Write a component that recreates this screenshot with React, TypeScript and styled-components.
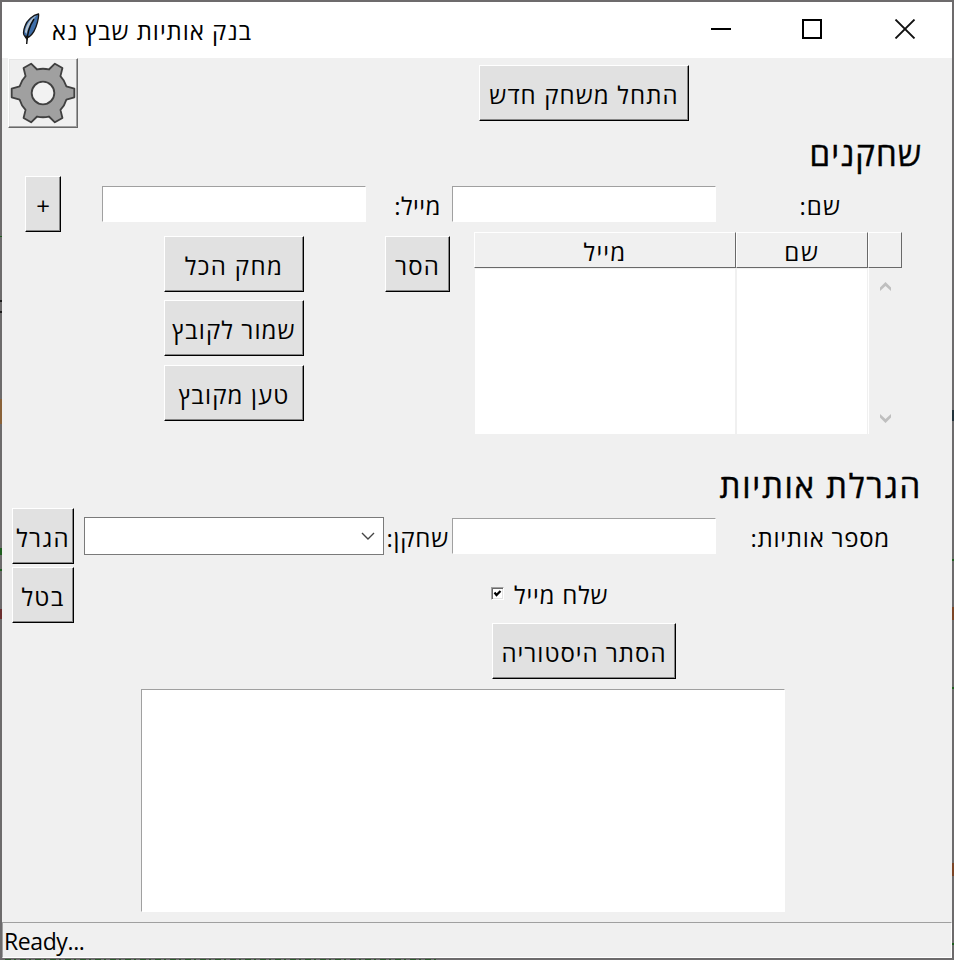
import React from "react";
import styled, { createGlobalStyle } from "styled-components";

const FACE = "#f0f0f0";
const SHADOW = "#a0a0a0";
const DARK = "#696969";

const GlobalStyle = createGlobalStyle`
  * { box-sizing: border-box; }
  body { margin: 0; }
`;

const Frame = styled.div`
  width: 954px;
  height: 960px;
  padding: 2px;
  overflow: hidden;
  background:
    linear-gradient(#1f5f1f, #1f5f1f) 0 236px / 2px 1px no-repeat,
    linear-gradient(#1c1c1c, #1c1c1c) 0 300px / 2px 2px no-repeat,
    linear-gradient(#1c1c1c, #1c1c1c) 0 311px / 2px 2px no-repeat,
    linear-gradient(#8a6238, #8a6238) 0 399px / 2px 25px no-repeat,
    linear-gradient(#1f5f1f, #1f5f1f) 0 548px / 2px 7px no-repeat,
    linear-gradient(#1f5f1f, #1f5f1f) 0 569px / 2px 2px no-repeat,
    linear-gradient(#6b2f2f, #6b2f2f) 0 609px / 2px 10px no-repeat,
    linear-gradient(#22313a, #22313a) 952px 410px / 2px 11px no-repeat,
    linear-gradient(#1f5f1f, #1f5f1f) 952px 559px / 2px 2px no-repeat,
    linear-gradient(#7c4526, #7c4526) 952px 607px / 2px 13px no-repeat,
    linear-gradient(#1f5f1f, #1f5f1f) 952px 687px / 2px 2px no-repeat,
    linear-gradient(#7c4526, #7c4526) 952px 863px / 2px 13px no-repeat,
    linear-gradient(#1f5f1f, #1f5f1f) 952px 943px / 2px 2px no-repeat,
    repeating-linear-gradient(90deg, #2c5a2c 0 6px, #6d6d6d 6px 9px, #2c5a2c 9px 11px, #6d6d6d 11px 15px) 5px 959px / 435px 1px no-repeat,
    #6d6b6c;
  font-family: "Open Sans", "Liberation Sans", sans-serif;
  font-size: 24px;
  line-height: 34px;
  color: #000;
`;

const Window = styled.div`
  display: flex;
  flex-direction: column;
  width: 950px;
  height: 956px;
  background: ${FACE};
`;

const Text = styled.span<{ $track?: number }>`
  direction: rtl;
  unicode-bidi: isolate;
  white-space: nowrap;
  letter-spacing: ${(p) => (p.$track ?? 0) + 0.5}px;
`;

const TitleBar = styled.header`
  display: flex;
  align-items: center;
  height: 56px;
  padding-left: 20px;
  background: #fff;
  svg { flex: none; display: block; }
`;

const Title = styled.div`
  flex: 1;
  margin-left: 12px;
  padding-top: 2px;
`;

const WindowControls = styled.div`
  display: flex;
  gap: 71px;
  margin: 0 36px 2px 0;
`;

const TopRow = styled.div`
  display: flex;
  align-items: flex-start;
  height: 78px;
  padding-left: 6px;
`;

const Button = styled.button<{ $w: number }>`
  display: flex;
  flex: none;
  align-items: center;
  justify-content: center;
  width: ${(p) => p.$w}px;
  height: 56px;
  padding: 4px 0 0;
  border: 1px solid;
  border-color: #fff #000 #000 #fff;
  box-shadow: inset -1px -1px #868686;
  border-radius: 0;
  background: #e1e1e1;
  color: #000;
  font: inherit;
`;

const GearButton = styled(Button)`
  height: 70px;
  padding: 0;
  border-color: #fff ${DARK} ${DARK} #fff;
  box-shadow: inset -1px -1px ${SHADOW}, inset 1px 1px #e6e6e6;
  background: ${FACE};
  svg { flex: none; }
`;

const StartButton = styled(Button)`
  margin: 7px 0 0 401px;
`;

const Heading = styled.h2`
  margin: 0;
  padding: 1px 30px 0 0;
  font-size: 33px;
  font-weight: 500;
  -webkit-text-stroke: 0.4px #000;
  line-height: 34px;
  height: 40px;
  text-align: right;
`;

const FieldRow = styled.div<{ $left: number }>`
  display: flex;
  align-items: center;
  height: 56px;
  padding-left: ${(p) => p.$left}px;
`;

const Entry = styled.input`
  flex: none;
  width: 264px;
  height: 36px;
  padding: 0 4px;
  border: 1px solid;
  border-color: ${SHADOW} #fff #fff ${SHADOW};
  border-radius: 0;
  background: #fff;
  font: inherit;
  outline: none;
`;

const MailEntry = styled(Entry)`
  margin-left: 41px;
`;

const Label = styled.label<{ $w: number; $right: number }>`
  display: flex;
  flex: none;
  justify-content: flex-end;
  width: ${(p) => p.$w}px;
  padding: 4px ${(p) => p.$right}px 0 0;
`;

const PlayersRow = styled.div`
  display: flex;
  align-items: flex-start;
  height: 236px;
  padding-left: 162px;
`;

const ButtonStack = styled.div`
  display: grid;
  grid-template-rows: 64px 65px 56px;
  margin: 4px 81px 0 0;
`;

const RemoveCell = styled.div`
  padding: 4px 24px 0 0;
`;

const Table = styled.div`
  display: grid;
  grid-template-columns: 262px 132px 34px;
  grid-template-rows: 36px 166px;
`;

const HeadCell = styled.div`
  display: flex;
  align-items: center;
  justify-content: center;
  line-height: 30px;
  padding-top: 4px;
  border: 1px solid;
  border-color: #fff ${DARK} ${DARK} #fff;
`;

const BodyCell = styled.div`
  border: 1px solid ${FACE};
  border-bottom: 0;
  background: #fff;
`;

const ScrollBar = styled.div`
  display: flex;
  flex-direction: column;
  align-items: center;
  justify-content: space-between;
  border-left: 1px solid #fff;
  padding: 14px 1px 11px 0;
  svg { display: block; }
`;

const Combo = styled.div`
  display: flex;
  align-items: center;
  justify-content: flex-end;
  flex: none;
  width: 300px;
  height: 38px;
  margin-left: 10px;
  padding-right: 8px;
  border: 1px solid #7a7a7a;
  background: #fff;
`;

const CancelRow = styled.div`
  display: flex;
  align-items: center;
  height: 56px;
  margin: 3px 0 0;
  padding-left: 10px;
`;

const MailCheck = styled.div`
  display: flex;
  align-items: center;
  gap: 10px;
  margin: -3px 0 0 417px;
`;

const CheckLabel = styled.label`
  padding-top: 2px;
`;

const CheckBox = styled.span`
  display: block;
  width: 13px;
  height: 13px;
  border: 1px solid;
  border-color: ${SHADOW} #fff #fff ${SHADOW};
  box-shadow: inset 1px 1px ${DARK}, inset -1px -1px #e3e3e3;
  background: #fff;
  svg { display: block; }
`;

const HistoryArea = styled.section`
  display: flex;
  flex-direction: column;
  flex: 1;
`;

const HistoryButton = styled(Button)`
  margin-left: 490px;
`;

const HistoryBox = styled.textarea`
  display: block;
  width: 644px;
  height: 223px;
  margin: 10px 0 0 139px;
  border: 1px solid;
  border-color: ${SHADOW} #fff #fff ${SHADOW};
  border-radius: 0;
  resize: none;
  outline: none;
`;

const StatusBar = styled.footer`
  height: 36px;
  padding: 1px 1px 0;
  border: 1px solid;
  border-color: ${SHADOW} #fff #fff ${SHADOW};
  font-size: 23px;
  letter-spacing: -0.4px;
`;

const Feather = () => (
  <svg width="18" height="34" viewBox="0 0 18 34">
    <path d="M16.500 1 C11 2 5 7 3 13 C1.500 17 1 20 2 22 L4 25 L7 24 C11 21 14 15 15.500 9 C16.500 5 17 3 16.500 1Z" fill="#3d6da8" stroke="#161616" strokeWidth="1.300" />
    <path d="M14.500 2.500 C9 5 4 11 3 19 L4.500 21 C6 14 10 7 14.500 2.500Z" fill="#b9c5cf" />
    <path d="M12 6 C8 12 5 19 4.700 31" fill="none" stroke="#0d0d0d" strokeWidth="1.400" />
    <path d="M3 22.500 L7 23 L5 28Z" fill="#111" />
  </svg>
);

const gearOutline = (() => {
  const tooth = [[70, -20], [94, -13], [94, 13], [70, 20]];
  let d = "";
  for (let i = 0; i < 6; i++) {
    const a = (i * Math.PI) / 3;
    tooth.forEach(([x, y], j) => {
      const px = (x * Math.cos(a) - y * Math.sin(a)).toFixed(1);
      const py = (x * Math.sin(a) + y * Math.cos(a)).toFixed(1);
      d += j === 0 ? (i === 0 ? `M${px} ${py}` : `A73 73 0 0 1 ${px} ${py}`) : `L${px} ${py}`;
    });
  }
  return d + "A73 73 0 0 1 70 -20Z";
})();

const Gear = () => (
  <svg width="66" height="66" viewBox="-99 -99 198 198" stroke="#404040" strokeWidth="5.500" strokeLinejoin="round">
    <path d={gearOutline} fill="#a0a0a0" />
    <circle r="34" fill="#f2f2f2" />
  </svg>
);

const Chevron = ({ up }: { up?: boolean }) => (
  <svg width="11" height="9" viewBox="0 0 11 9">
    <path d={up ? "M0 5.500L5.500 0L11 5.500V9L5.500 4L0 9Z" : "M0 3.500L5.500 9L11 3.500V0L5.500 5L0 0Z"} fill="#bfbfbf" />
  </svg>
);

export default function App() {
  return (
    <>
      <GlobalStyle />
      <Frame>
        <Window>
          <TitleBar>
            <Feather />
            <Title><Text $track={0.45}>בנק אותיות שבץ נא</Text></Title>
            <WindowControls>
              <svg width="20" height="20"><path d="M0 10H20" stroke="#000" strokeWidth="2" /></svg>
              <svg width="20" height="20"><rect x="1" y="1" width="18" height="18" fill="none" stroke="#000" strokeWidth="2" /></svg>
              <svg width="23" height="20" viewBox="0 0 23 20"><path d="M2.500 .5L21.500 19.500M21.500 .5L2.500 19.500" stroke="#111" strokeWidth="1.800" /></svg>
            </WindowControls>
          </TitleBar>

          <TopRow>
            <GearButton $w={70}><Gear /></GearButton>
            <StartButton $w={210}><Text $track={0.62}>התחל משחק חדש</Text></StartButton>
          </TopRow>

          <Heading><Text $track={0.5}>שחקנים</Text></Heading>

          <FieldRow $left={23}>
            <Button $w={36}>+</Button>
            <MailEntry />
            <Label $w={86} $right={11}><Text>מייל:</Text></Label>
            <Entry />
            <Label $w={126} $right={1}><Text $track={0.6}>שם:</Text></Label>
          </FieldRow>

          <PlayersRow>
            <ButtonStack>
              <Button $w={140}><Text $track={0.9}>מחק הכל</Text></Button>
              <Button $w={140}><Text $track={0.6}>שמור לקובץ</Text></Button>
              <Button $w={140}><Text $track={0.6}>טען מקובץ</Text></Button>
            </ButtonStack>
            <RemoveCell>
              <Button $w={65}><Text $track={0.7}>הסר</Text></Button>
            </RemoveCell>
            <Table>
              <HeadCell><Text $track={0.7}>מייל</Text></HeadCell>
              <HeadCell><Text $track={1.2}>שם</Text></HeadCell>
              <HeadCell />
              <BodyCell />
              <BodyCell />
              <ScrollBar><Chevron up /><Chevron /></ScrollBar>
            </Table>
          </PlayersRow>

          <Heading><Text $track={1.2}>הגרלת אותיות</Text></Heading>

          <FieldRow $left={10}>
            <Button $w={62}><Text $track={0.8}>הגרל</Text></Button>
            <Combo>
              <svg width="14" height="9" viewBox="0 0 14 9"><path d="M1 1L7 7L13 1" fill="none" stroke="#444" strokeWidth="1.400" /></svg>
            </Combo>
            <Label $w={68} $right={3}><Text $track={0.3}>שחקן:</Text></Label>
            <Entry />
            <Label $w={175} $right={1}><Text $track={0.25}>מספר אותיות:</Text></Label>
          </FieldRow>

          <CancelRow>
            <Button $w={62}><Text $track={0.8}>בטל</Text></Button>
            <MailCheck>
              <CheckBox>
                <svg width="11" height="11" viewBox="0 0 11 11"><path d="M2.500 4.500L4.500 7L8.500 3" fill="none" stroke="#000" strokeWidth="2.200" /></svg>
              </CheckBox>
              <CheckLabel><Text $track={0.3}>שלח מייל</Text></CheckLabel>
            </MailCheck>
          </CancelRow>

          <HistoryArea>
            <HistoryButton $w={184}><Text $track={0.5}>הסתר היסטוריה</Text></HistoryButton>
            <HistoryBox />
          </HistoryArea>

          <StatusBar>Ready...</StatusBar>
        </Window>
      </Frame>
    </>
  );
}
